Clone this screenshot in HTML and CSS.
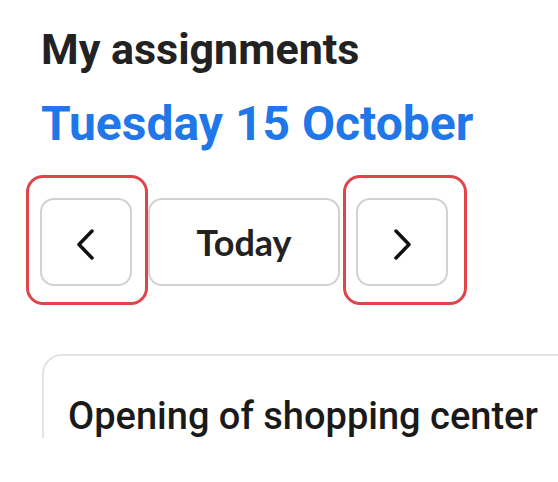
FILE: index.html
```html
<!DOCTYPE html>
<html lang="en">
<head>
  <meta charset="UTF-8">
  <meta name="viewport" content="width=device-width, initial-scale=1.0">
  <title>My assignments</title>
  <link rel="stylesheet" href="styles.css">
</head>
<body>
  <div class="screen">
    <h1 class="title">My assignments</h1>
    <h2 class="date">Tuesday 15 October</h2>

    <div class="day-nav">
      <button class="nav-btn prev" aria-label="Previous day">
        <svg width="22" height="34" viewBox="0 0 22 34">
          <path d="M17 3 L4 16.5 L17 30" fill="none" stroke="#111" stroke-width="3.5" stroke-linecap="round" stroke-linejoin="round"/>
        </svg>
        <span class="highlight"></span>
      </button>
      <button class="nav-btn today">Today</button>
      <button class="nav-btn next" aria-label="Next day">
        <svg width="22" height="34" viewBox="0 0 22 34">
          <path d="M5 3 L18 16.5 L5 30" fill="none" stroke="#111" stroke-width="3.5" stroke-linecap="round" stroke-linejoin="round"/>
        </svg>
        <span class="highlight"></span>
      </button>
    </div>

    <div class="card">
      <p class="card-title">Opening of shopping center</p>
    </div>
  </div>
</body>
</html>
```

FILE: styles.css
```css
body {
  margin: 0;
  padding: 0;
  background-color: #fff;
  font-family: Roboto, "Liberation Sans", sans-serif;
}

.screen {
  height: 438px;
  overflow: hidden;
  padding: 24px 0 0 41px;
  box-sizing: border-box;
}

.title {
  margin: 0;
  font-size: 43px;
  line-height: 1.2;
  font-weight: 700;
  color: #222;
}

.date {
  margin: 19px 0 0;
  font-size: 48px;
  line-height: 1.2;
  font-weight: 700;
  color: #1f77e9;
}

.day-nav {
  display: flex;
  gap: 16px;
  margin-top: 46px;
  margin-left: -1px;
}

.nav-btn {
  position: relative;
  height: 88px;
  width: 92px;
  padding: 0;
  display: flex;
  align-items: center;
  justify-content: center;
  background: #fff;
  border: 2.5px solid #d2d2d2;
  border-radius: 14px;
  box-sizing: border-box;
}

.nav-btn svg {
  margin-top: 6px;
}

.today {
  width: 192px;
  font-family: Lato, "Liberation Sans", sans-serif;
  font-size: 36px;
  font-weight: 700;
  color: #222;
}

/* red outline drawn over the arrow buttons */
.highlight {
  position: absolute;
  top: -25px;
  left: -16px;
  width: 122px;
  height: 130px;
  border: 3px solid #e0444b;
  border-radius: 17px;
  box-sizing: border-box;
}

.next .highlight {
  left: -15px;
  width: 124px;
}

.card {
  margin-top: 68px;
  margin-left: 1px;
  width: 600px;
  height: 200px;
  border: 2px solid #e3e3e3;
  border-radius: 20px;
  padding: 38px 24px 0;
}

.card-title {
  margin: 0;
  font-size: 38px;
  line-height: 1.2;
  font-weight: 500;
  color: #1a1a1a;
}
```
